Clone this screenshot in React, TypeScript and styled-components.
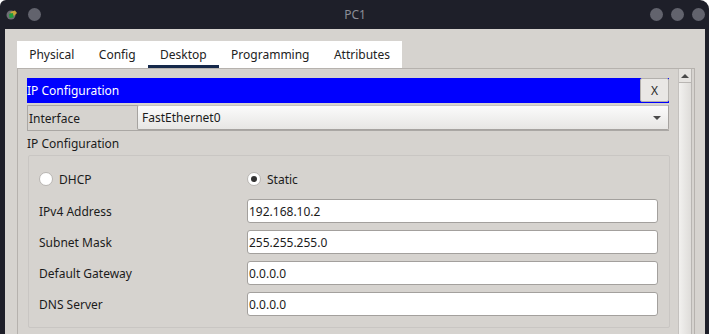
import { Fragment } from "react";
import styled, { createGlobalStyle } from "styled-components";

const GlobalStyle = createGlobalStyle`
  * {
    box-sizing: border-box;
    margin: 0;
    padding: 0;
  }
  html, body {
    background: #ffffff;
    overflow: hidden;
  }
  body {
    font-family: "Noto Sans", "Open Sans", sans-serif;
    font-size: 12px;
    color: #1b1b1b;
  }
`;

const Window = styled.div`
  width: 709px;
  height: 334px;
  background: #1e1f29;
  border-radius: 6px 9px 0 0;
  display: flex;
  flex-direction: column;
  padding: 0 4px 0 5px;
  overflow: hidden;
`;

const TitleBar = styled.div`
  height: 29px;
  flex: none;
  display: grid;
  grid-template-columns: 1fr auto 1fr;
  align-items: center;
`;

const TitleLeft = styled.div`
  display: flex;
  align-items: center;
  gap: 9px;
  padding-left: 1px;
`;

const TitleText = styled.div`
  color: #8c8d97;
  font-size: 12px;
`;

const TitleRight = styled.div`
  display: flex;
  justify-content: flex-end;
  gap: 8px;
`;

const Dot = styled.span`
  width: 13px;
  height: 13px;
  border-radius: 50%;
  background: #62636d;
`;

const Body = styled.div`
  flex: 1;
  background: #d6d3cf;
  padding: 12px 10px 0 12px;
  display: flex;
  flex-direction: column;
`;

const TabBar = styled.div`
  display: flex;
  align-self: flex-start;
  background: #ffffff;
  height: 27px;
`;

const Tab = styled.div<{ $active?: boolean }>`
  padding: 2px 12.2px 0;
  display: flex;
  align-items: center;
  color: #222;
  border-bottom: 3px solid ${(p) => (p.$active ? "#15284a" : "transparent")};
`;

const Panel = styled.div`
  flex: 1;
  display: flex;
  border: 1px solid #b6b2ae;
  border-bottom: none;
  padding-right: 1px;
`;

const Content = styled.div`
  flex: 1;
  padding: 9px 9px 0 9px;
  display: flex;
  flex-direction: column;
`;

const Header = styled.div`
  height: 25px;
  background: #0000ff;
  color: #ffffff;
  display: flex;
  align-items: center;
  justify-content: space-between;
`;

const CloseButton = styled.div`
  width: 29px;
  height: 24px;
  align-self: flex-start;
  background: #e9e7e5;
  border: 1px solid #b3b0ad;
  border-radius: 2px;
  display: flex;
  align-items: center;
  justify-content: center;
  color: #2a2a2a;
  font-size: 12px;
`;

const InterfaceRow = styled.div`
  margin-top: 2px;
  height: 26px;
  border: 1px solid #aaa7a4;
  border-right: none;
  display: flex;
  align-items: stretch;
`;

const RowLabel = styled.div`
  width: 109px;
  display: flex;
  align-items: center;
  padding-left: 1px;
`;

const Select = styled.div`
  flex: 1;
  background: linear-gradient(#fbfbfb, #e7e6e4);
  border: 1px solid #a6a3a0;
  border-top-color: #c7c4c1;
  border-radius: 2px;
  margin-top: -1px;
  display: flex;
  align-items: center;
  justify-content: space-between;
  padding: 0 7px 0 4px;
`;

const Arrow = styled.span`
  width: 0;
  height: 0;
  border-left: 4px solid transparent;
  border-right: 4px solid transparent;
  border-top: 4px solid #4a4a4a;
`;

const SectionLabel = styled.div`
  height: 24px;
  display: flex;
  align-items: center;
`;

const GroupBox = styled.div`
  margin: 0 -1px 0 1px;
  border: 1px solid #c9c6c3;
  border-radius: 2px;
  padding: 12px 11px 11px 10px;
  display: grid;
  grid-template-columns: 208px 1fr;
  grid-auto-rows: 24px;
  row-gap: 7px;
  align-items: center;
`;

const Radio = styled.label`
  display: flex;
  align-items: center;
  gap: 6px;
  margin-top: -2px;
`;

const RadioCircle = styled.span<{ $checked?: boolean }>`
  width: 14px;
  height: 14px;
  border-radius: 50%;
  background: #ffffff;
  border: 1px solid #b8b5b2;
  display: flex;
  align-items: center;
  justify-content: center;
  &::after {
    content: "";
    width: 6px;
    height: 6px;
    border-radius: 50%;
    background: ${(p) => (p.$checked ? "#333" : "transparent")};
  }
`;

const FieldLabel = styled.div``;

const Input = styled.div`
  height: 24px;
  background: #ffffff;
  border: 1px solid #a3a09d;
  border-radius: 3px;
  display: flex;
  align-items: center;
  padding-left: 1px;
`;

const Scrollbar = styled.div`
  width: 14px;
  margin-right: 1px;
  background: linear-gradient(to right, #f2f1ef, #dedcd9);
  border-left: 1px solid #c4c1be;
  border-right: 1px solid #b8b5b2;
  display: flex;
  flex-direction: column;
`;

const ScrollUp = styled.div`
  height: 14px;
  border-bottom: 1px solid #b8b5b2;
  background: #e6e4e1;
  display: flex;
  align-items: center;
  justify-content: center;
  &::after {
    content: "";
    border-left: 4px solid transparent;
    border-right: 4px solid transparent;
    border-bottom: 4px solid #4a4a4a;
  }
`;

const AppIcon = () => (
  <svg width="13" height="13" viewBox="0 0 13 13">
    <circle cx="5" cy="7" r="4.5" fill="#6d6e74" />
    <path d="M4 4 L9 2.5 L11 5 L8 8 Z" fill="#c7a43a" />
    <path d="M3 6 L7 5 L7.5 9.5 L3.5 10 Z" fill="#1f9d3a" />
  </svg>
);

const tabs = ["Physical", "Config", "Desktop", "Programming", "Attributes"];

const fields = [
  ["IPv4 Address", "192.168.10.2"],
  ["Subnet Mask", "255.255.255.0"],
  ["Default Gateway", "0.0.0.0"],
  ["DNS Server", "0.0.0.0"],
];

const App = () => {
  return (
    <>
      <GlobalStyle />
      <Window>
        <TitleBar>
          <TitleLeft>
            <AppIcon />
            <Dot />
          </TitleLeft>
          <TitleText>PC1</TitleText>
          <TitleRight>
            <Dot />
            <Dot />
            <Dot />
          </TitleRight>
        </TitleBar>
        <Body>
          <TabBar>
            {tabs.map((t) => (
              <Tab key={t} $active={t === "Desktop"}>
                {t}
              </Tab>
            ))}
          </TabBar>
          <Panel>
            <Content>
              <Header>
                <span>IP Configuration</span>
                <CloseButton>X</CloseButton>
              </Header>
              <InterfaceRow>
                <RowLabel>Interface</RowLabel>
                <Select>
                  <span>FastEthernet0</span>
                  <Arrow />
                </Select>
              </InterfaceRow>
              <SectionLabel>IP Configuration</SectionLabel>
              <GroupBox>
                <Radio>
                  <RadioCircle />
                  DHCP
                </Radio>
                <Radio>
                  <RadioCircle $checked />
                  Static
                </Radio>
                {fields.map(([label, value]) => (
                  <Fragment key={label}>
                    <FieldLabel>{label}</FieldLabel>
                    <Input>{value}</Input>
                  </Fragment>
                ))}
              </GroupBox>
            </Content>
            <Scrollbar>
              <ScrollUp />
            </Scrollbar>
          </Panel>
        </Body>
      </Window>
    </>
  );
};

export default App;
